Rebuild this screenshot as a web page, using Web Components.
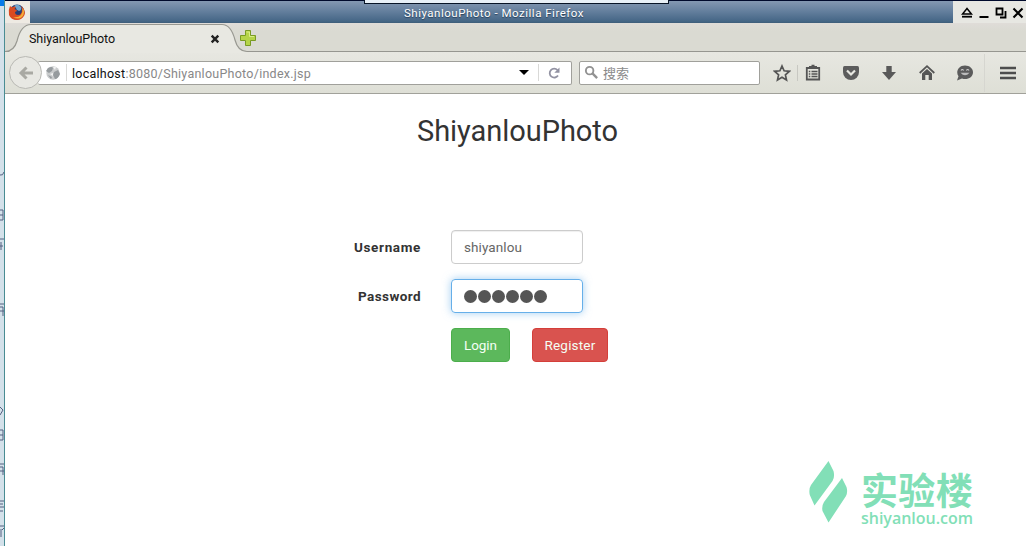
<!DOCTYPE html>
<html lang="zh"><head><meta charset="utf-8"><title>ShiyanlouPhoto</title>
<style>html,body{margin:0;height:100%;overflow:hidden;background:#fff}body{font-family:Roboto,"Noto Sans CJK SC",sans-serif}</style></head>
<body><desktop-view></desktop-view>
<script>
function define(name, markup, ready){
  const t=document.createElement('template');t.innerHTML=markup;
  customElements.define(name,class extends HTMLElement{
    constructor(){super();this.attachShadow({mode:'open'}).append(t.content.cloneNode(true));}
    connectedCallback(){if(ready)ready(this);}
  });
}
/* Single text line whose tracking is adjusted to a given width. */
define('fit-text','<style>:host{display:block;white-space:nowrap;flex:none}span{display:inline-block}</style><span><slot></slot></span>',el=>{
  const s=el.shadowRoot.querySelector('span'),w=+el.getAttribute('width');
  const n=[...el.textContent].length;
  const d=(w-s.getBoundingClientRect().width)/n;
  s.style.letterSpacing=d+'px';el.style.width=w+'px';
});
const icons={
firefox:['0 0 18 18','<circle cx="9" cy="9" r="7.5" fill="#263f77"/><path d="M6 3Q10 0 13 4Q14 7 11 8Q8 7 8 5" fill="#72a6cf"/><path d="M2 3L4 4.5Q6 3 8 4L6.5 6Q9 7 9 8L7 9Q7 12 10 12Q14 12 14 6L13 3Q18 7 16.5 12Q14 17 9 17Q3 17 1 12Q0 7 2 3Z" fill="#db4b20"/><path d="M14.5 5Q18 9 14 14Q10 17 5 14Q10 15 13 12Q15 9 14.5 5Z" fill="#f5ad37"/>'],
close:['0 0 10 10','<path d="M1.7 1.7L8.3 8.3M8.3 1.7L1.7 8.3" stroke="#222" stroke-width="2.4"/>'],
plus:['0 0 18 18','<path d="M6.5 1.5h5v5h5v5h-5v5h-5v-5h-5v-5h5z" fill="#b5d448" stroke="#799b23"/><path d="M7.5 3h3v4.5H15" fill="none" stroke="#d9ed86"/>'],
back:['0 0 16 16','<path d="M8.5 2.5L3 8l5.5 5.5M3.5 8H15" fill="none" stroke="#a9a9a3" stroke-width="3"/>'],
globe:['0 0 16 16','<circle cx="8" cy="8" r="6.7" fill="#c9cbcc"/><path d="M3 3Q7 1 8 3L7 6L4 8L1 6ZM9 7L13 5L15 9Q13 14 10 14L8 10ZM3 10L7 12L6 14Z" fill="#969b9e"/><path d="M8 2L11 2L10 5ZM5 9L8 11L8 8Z" fill="#f2f2f2"/>'],
reload:['0 0 14 14','<path d="M11 9.5A4.5 4.5 0 1 1 10.5 4" fill="none" stroke="#9292a2" stroke-width="1.8"/><path d="M12.5 1.5v5.2H7.3z" fill="#9292a2"/>'],
search:['0 0 16 16','<circle cx="6" cy="6" r="4" fill="none" stroke="#929292" stroke-width="2"/><path d="M9 9l5 5" stroke="#929292" stroke-width="2.5"/>'],
star:['0 0 18 18','<path d="M9 2l2.1 4.8 5.2.5-3.9 3.5 1.1 5.1L9 13.2l-4.5 2.7 1.1-5.1-3.9-3.5 5.2-.5z" fill="none" stroke="#555" stroke-width="1.7"/>'],
clip:['0 0 18 18','<path d="M2.800 4h12.400v11.500H2.800z" fill="none" stroke="#555" stroke-width="1.8"/><path d="M5 2h2.500V.8h3V2H13v3H5z" fill="#555"/><path d="M4.800 7.500h1.500M7.500 7.500h6M4.800 10h1.500M7.500 10h6M4.800 12.500h1.500M7.500 12.500h6" stroke="#555" stroke-width="1.4"/>'],
pocket:['0 0 18 18','<path d="M2.5 2h13Q17 2 17 4v4a8 8 0 0 1-16 0V4Q1 2 2.5 2z" fill="#5c5c5c"/><path d="M5 6.5l4 4 4-4" fill="none" stroke="#e7e7e1" stroke-width="2.2"/>'],
down:['0 0 18 18','<path d="M6.3 2h5.4v6H16l-7 8-7-8h4.3z" fill="#595959"/>'],
home:['0 0 18 18','<path d="M1.7 9L9 2.2 16.3 9" fill="none" stroke="#555" stroke-width="1.8"/><path d="M4 9.6l5-4.5 5 4.5V16h-3.3v-5H7.3v5H4z" fill="#555"/>'],
chat:['0 0 18 18','<path d="M9 1.5c4.500 0 8 2.800 8 6.800s-3.500 6.800-8 6.800c-1 0-2-.1-3-.5L1 16.500l1.500-4.300C-.5 8.500 2 1.500 9 1.500z" fill="#5b5b5b"/><path d="M4.500 8.700Q9 14 13.500 8.700Z" fill="#bbb"/><path d="M5 6.500Q6.300 4.500 7.600 6.500M10.400 6.500Q11.700 4.500 13 6.500" fill="none" stroke="#ccc" stroke-width="1.2"/>'],
menu:['0 0 18 18','<path d="M1 4h16M1 9h16M1 14h16" stroke="#4d4d4d" stroke-width="2.4"/>'],
eject:['0 0 12 12','<path d="M6 1.5L10.5 7h-9z" fill="none" stroke="#000" stroke-width="1.5"/><path d="M1 9.7h10" stroke="#000" stroke-width="1.8"/>'],
min:['0 0 12 12','<path d="M1.5 10h9" stroke="#000" stroke-width="2"/>'],
max:['0 0 12 12','<path d="M1.5 1.5h6v6h-6zM5 10.5h5.5V4" fill="none" stroke="#000" stroke-width="1.8"/>'],
x:['0 0 12 12','<path d="M1.5 1.5l9 9M10.5 1.5l-9 9" stroke="#000" stroke-width="2.1"/>'],
leaf:['0 0 40 66','<path d="M19.5 1L24.5 11Q26 17 23.500 21L5.5 45.500L.8 35Q-.5 29 2 25ZM33 18L37.500 27Q39 32 37 36L19.500 62.500L13.500 51Q12.500 46 15 42Z" fill="#82dfb7"/>']
};
define('ui-icon','<style>:host{display:block;flex:none}svg{display:block;width:100%;height:100%}</style><svg></svg>',el=>{
 const i=icons[el.getAttribute('name')],s=el.shadowRoot.querySelector('svg');s.setAttribute('viewBox',i[0]);s.innerHTML=i[1];
 el.style.width=el.getAttribute('w')+'px';el.style.height=(el.getAttribute('h')||el.getAttribute('w'))+'px';
});
define('title-bar',`<style>:host{display:grid;grid-template-columns:25px 1fr 73px;height:22px;background:#e0e0d9;position:relative}.mid{background:linear-gradient(#8498b2,#65809e 45%,#456686 92%,#3e5d79);display:flex;padding:4px 0 0 374px;font-size:11.5px;line-height:16px;color:#fff;text-shadow:0 1px 1px #243e58}.fx{display:grid;place-items:center;background:#eeeae3}.fx ui-icon{margin-left:-2px}.win{display:flex;gap:5px;align-items:center;padding-left:8px;background:#e7e7e2}.win ui-icon{margin-top:2px}.notch{position:absolute;left:359px;top:-1px;width:303px;height:3px;background:#e8f0f7;border:1px solid #071426;border-top:0}</style>
<div class="fx"><ui-icon name="firefox" w="18"></ui-icon></div><div class="mid"><fit-text width="180">ShiyanlouPhoto - Mozilla Firefox</fit-text></div><div class="win"><ui-icon name="eject" w="12"></ui-icon><ui-icon name="min" w="12"></ui-icon><ui-icon name="max" w="12"></ui-icon><ui-icon name="x" w="12"></ui-icon></div><div class="notch"></div>`);
define('tab-strip',`<style>:host{display:flex;height:29px;background:linear-gradient(#dfdcd8 0,#dadad2 8px);box-shadow:inset 0 -1px #969690}.tab{width:242px;height:30px;display:grid;grid-template-columns:205px 1fr;align-items:center;isolation:isolate;position:relative}.tab ui-icon{margin-top:2px}.shape{position:absolute;inset:0;z-index:-1}.name{padding:1px 0 0 24px;font-size:12.5px;color:#111}.add{margin-left:-8px;margin-top:6px}</style>
<div class="tab"><svg class="shape" width="242" height="30"><path d="M0 29.5Q9 29 12 18Q16 1.5 26 1.5H217Q226 1.5 230 17Q233 28.5 242 28.5V30H0Z" fill="#e8e8e2"/><path d="M0 28.5Q9 28.5 12 18Q16 1.5 26 1.5H217Q226 1.5 230 17Q233 28.5 242 28.5" fill="none" stroke="#989891" stroke-width="1.2"/></svg><fit-text class="name" width="86">ShiyanlouPhoto</fit-text><ui-icon name="close" w="10"></ui-icon></div><ui-icon class="add" name="plus" w="18"></ui-icon>`);
define('nav-bar',`<style>:host{display:flex;align-items:center;height:42px;box-sizing:border-box;border-bottom:1px solid #a1a19a;background:linear-gradient(#e7e7e1,#dedfd6);padding-left:4px}.back{width:31px;height:31px;border:1px solid #b9b9b4;border-radius:50%;display:grid;place-items:center;background:#e8e8e3;z-index:1}.field{height:22px;border:1px solid #a0a09b;background:#fff;display:flex;align-items:center;border-radius:2px}.url{width:533px;margin-left:-4px;border-left:0;font-size:12.5px;color:#888}.url b{font-weight:400;color:#111}.url fit-text{margin-top:1px}.url>.g{margin-left:7px}.url .v{width:1px;height:17px;background:#d9d9d7;margin:0 5px}.tri{border:5px solid transparent;border-top:5px solid #000;border-bottom:0;margin-left:208px}.url .r{margin-left:9px}.url .r+ui-icon{margin-left:3px}.search{width:179px;margin-left:7px;font-size:13px;color:#8a8a8a}.search ui-icon{margin:0 4px}.tools{display:flex;align-items:center;margin-left:13px}.s{width:1px;height:16px;background:#c8c8c2;margin:0 6px}.m{margin-left:20px}.c{margin-left:20px}.last{width:1px;height:38px;background:#d6d6d0;margin:0 14px 0 10px}</style>
<div class="back"><ui-icon name="back" w="16"></ui-icon></div><div class="field url"><ui-icon class="g" name="globe" w="16"></ui-icon><div class="v"></div><fit-text width="239"><b>localhost</b>:8080/ShiyanlouPhoto/index.jsp</fit-text><div class="tri"></div><div class="v r"></div><ui-icon name="reload" w="14"></ui-icon></div><div class="field search"><ui-icon name="search" w="15"></ui-icon>搜索</div><div class="tools"><ui-icon name="star" w="18"></ui-icon><div class="s"></div><ui-icon name="clip" w="18"></ui-icon><ui-icon class="m" name="pocket" w="18"></ui-icon><ui-icon class="m" name="down" w="18"></ui-icon><ui-icon class="m" name="home" w="18"></ui-icon><ui-icon class="c" name="chat" w="18"></ui-icon><div class="last"></div><ui-icon name="menu" w="18"></ui-icon></div>`);
define('form-field',`<style>:host{display:grid;align-items:center;height:34px;font-size:13.5px}.label{justify-self:end;font-weight:700;color:#333}.box{height:34px;box-sizing:border-box;border:1px solid #ccc;border-radius:4px;padding:0 12px;display:flex;align-items:center;color:#666;box-shadow:inset 0 1px 1px #0001}:host([focused]) .box{border-color:#66afe9;box-shadow:0 0 8px #66afe999}</style><div class="label"><slot name="label"></slot></div><div class="box"><slot></slot></div>`);
define('action-button',`<style>:host{display:grid;place-items:center;height:34px;box-sizing:border-box;border:1px solid #4cae4c;border-radius:4px;background:#5cb85c;color:#f4fff4;font-size:13.5px;width:59px}:host([danger]){width:76px;background:#d9534f;border-color:#d43f3a}</style><slot></slot>`);
define('password-dots','<style>:host{display:flex;gap:1px}i{width:13px;height:13px;border-radius:50%;background:#555}</style><i></i><i></i><i></i><i></i><i></i><i></i>');
define('login-page',`<style>:host{display:block;background:#fff;color:#333}h1{font:400 29px/34px Roboto,sans-serif;margin:0;padding:20px 0 0 412px}.form{padding:82px 0 0 349px;display:grid;row-gap:15px;grid-template-columns:1fr}form-field{grid-template-columns:67px 132px;column-gap:30px}.actions{display:flex;gap:22px;padding-left:97px}.brand{display:grid;grid-template-columns:40px 120px;column-gap:12px;padding:98px 0 0 804px;color:#82dfb7}.words{padding-top:9px}.cn{font:700 37px/40px "Noto Sans CJK SC",sans-serif}.en{font:600 16px/16px "Open Sans",sans-serif;padding-top:1px}</style>
<h1><fit-text width="201">ShiyanlouPhoto</fit-text></h1><div class="form"><form-field><fit-text slot="label" width="67">Username</fit-text><fit-text width="58">shiyanlou</fit-text></form-field><form-field focused><fit-text slot="label" width="63">Password</fit-text><password-dots></password-dots></form-field><div class="actions"><action-button><fit-text width="33">Login</fit-text></action-button><action-button danger><fit-text width="51">Register</fit-text></action-button></div></div><div class="brand"><ui-icon name="leaf" w="40" h="66"></ui-icon><div class="words"><fit-text class="cn" width="112">实验楼</fit-text><fit-text class="en" width="112">shiyanlou.com</fit-text></div></div>`);
define('edge-strip',`<style>:host{display:block;background:#d4e1ea;border-right:1px solid #498c93;overflow:hidden}svg{display:block}</style><svg width="4" height="546"><path d="M0 0h4v6H0z" fill="#087bea"/><g fill="none" stroke="#536081"><path d="M0 175Q3 176 4 172M0 210h3v10H0M0 215h3M0 239h4M1 242v8M0 246h3M0 304h4M0 307h3v9M0 311h4M0 407l3 3-3 5M0 430h3v10H0M0 435h3M0 464h4M0 467h3v8M0 471h4M0 501h4M0 504h3M0 507h4M0 511h3M0 526h4M1 529v8M2 530l2-2"/></g></svg>`);
define('desktop-view',`<style>:host{display:grid;grid-template-columns:5px 1fr;width:1026px;height:546px;overflow:hidden}.window{display:grid;grid-template-rows:22px 29px 42px 1fr;border-top:1px solid #000a2c}</style><edge-strip></edge-strip><div class="window"><title-bar></title-bar><tab-strip></tab-strip><nav-bar></nav-bar><login-page></login-page></div>`);
</script></body></html>
